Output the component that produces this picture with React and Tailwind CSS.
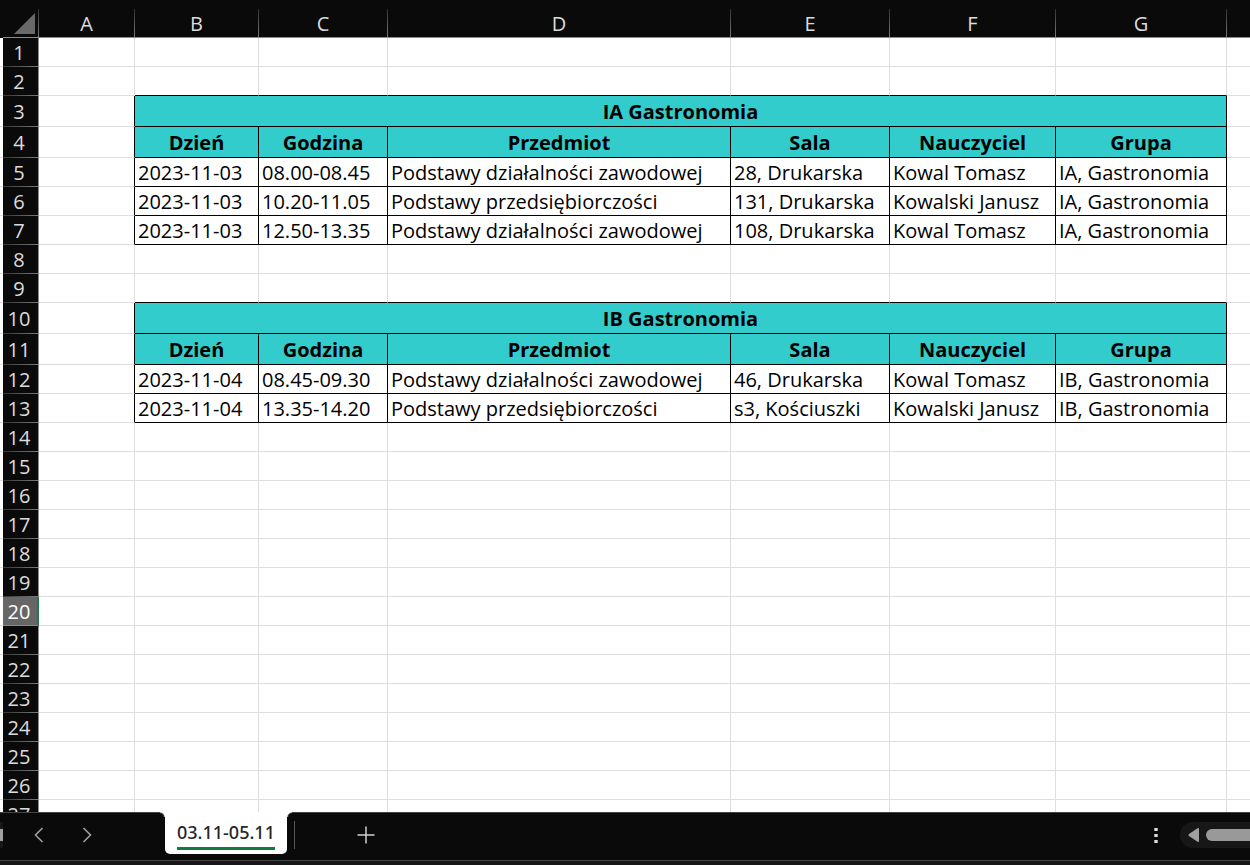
import React from "react";

const columns = ["A", "B", "C", "D", "E", "F", "G"];
const headings = ["Dzień", "Godzina", "Przedmiot", "Sala", "Nauczyciel", "Grupa"];

const rows = {
  3: { title: "IA Gastronomia" },
  4: { headings },
  5: { data: ["2023-11-03", "08.00-08.45", "Podstawy działalności zawodowej", "28, Drukarska", "Kowal Tomasz", "IA, Gastronomia"] },
  6: { data: ["2023-11-03", "10.20-11.05", "Podstawy przedsiębiorczości", "131, Drukarska", "Kowalski Janusz", "IA, Gastronomia"] },
  7: { data: ["2023-11-03", "12.50-13.35", "Podstawy działalności zawodowej", "108, Drukarska", "Kowal Tomasz", "IA, Gastronomia"] },
  10: { title: "IB Gastronomia" },
  11: { headings },
  12: { data: ["2023-11-04", "08.45-09.30", "Podstawy działalności zawodowej", "46, Drukarska", "Kowal Tomasz", "IB, Gastronomia"] },
  13: { data: ["2023-11-04", "13.35-14.20", "Podstawy przedsiębiorczości", "s3, Kościuszki", "Kowalski Janusz", "IB, Gastronomia"] },
};

const rowNumbers = Array.from({ length: 27 }, (_, i) => i + 1);
const SELECTED_ROW = 20;

function RowHeader({ number }) {
  const selected = number === SELECTED_ROW;
  return (
    <th
      scope="row"
      className={
        selected
          ? "border-b border-r-2 border-b-[#8a8a8a] border-r-[#1e7b4b] bg-[#666666] pb-0 pl-0 pr-[2px] pt-px text-center font-normal text-white"
          : "border-r border-[#8a8a8a] bg-[#0a0a0a] bg-[linear-gradient(to_right,#333333,#7a7a7a)] bg-[length:100%_1px] bg-bottom bg-no-repeat pb-0 pl-0 pr-[3px] pt-px text-center font-normal text-[#dcdcdc]"
      }
    >
      {number}
    </th>
  );
}

function Cells({ number }) {
  const row = rows[number];
  if (!row) {
    const aboveTable = Boolean(rows[number + 1]);
    return columns.slice(1).map((c) => (
      <td
        key={c}
        className={
          aboveTable
            ? "border-b border-r border-b-black border-r-[#dedede]"
            : "border-b border-r border-[#dedede]"
        }
      />
    ));
  }
  if (row.title) {
    return (
      <th colSpan={6} scope="colgroup" className="border-b border-r border-black bg-[#33cccc] px-0 pb-0 pt-[2px] text-center font-bold">
        {row.title}
      </th>
    );
  }
  if (row.headings) {
    return row.headings.map((h) => (
      <th key={h} scope="col" className="border-b border-r border-black bg-[#33cccc] px-0 pb-0 pt-[2px] text-center font-bold">
        {h}
      </th>
    ));
  }
  return row.data.map((value, i) => (
    <td key={i} className="overflow-hidden whitespace-nowrap border-b border-r border-black pb-0 pl-[3px] pr-0 pt-px">
      {value}
    </td>
  ));
}

function Sheet() {
  return (
    <table className="w-full table-fixed border-separate border-spacing-0 text-[20px] leading-[26px] text-black">
      <colgroup>
        <col className="w-[3px]" />
        <col className="w-[36px]" />
        <col className="w-[96px]" />
        <col className="w-[124px]" />
        <col className="w-[129px]" />
        <col className="w-[343px]" />
        <col className="w-[159px]" />
        <col className="w-[166px]" />
        <col className="w-[171px]" />
        <col />
      </colgroup>
      <thead>
        <tr className="h-[38px] bg-[#0a0a0a]">
          <td className="p-0" />
          <td className="border-b border-[#8a8a8a] bg-[linear-gradient(to_bottom,#333333,#7a7a7a)] bg-[length:1px_28px] bg-right-bottom bg-no-repeat p-0">
            <button type="button" aria-label="Select all" className="flex h-[37px] w-full items-end justify-end pb-[3px] pr-[4px]">
              <svg width="21" height="21" viewBox="0 0 21 21" aria-hidden="true">
                <path d="M21 0V21H0Z" fill="#696969" />
              </svg>
            </button>
          </td>
          {columns.map((c) => (
            <th
              key={c}
              scope="col"
              className="border-b border-[#8a8a8a] bg-[linear-gradient(to_bottom,#333333,#7a7a7a)] bg-[length:1px_28px] bg-right-bottom bg-no-repeat pb-0 pl-0 pr-px pt-[10px] text-center font-normal text-[#dcdcdc]"
            >
              {c}
            </th>
          ))}
          <td className="border-b border-[#8a8a8a] p-0" />
        </tr>
      </thead>
      <tbody>
        {rowNumbers.map((n) => (
          <tr key={n} className={rows[n] && !rows[n].data ? "h-[31px]" : "h-[29px]"}>
            <td className="border-b border-[#dedede] p-0" />
            <RowHeader number={n} />
            <td
              className={
                rows[n]
                  ? "border-b border-r border-b-[#dedede] border-r-black"
                  : "border-b border-r border-[#dedede]"
              }
            />
            <Cells number={n} />
            <td className="border-b border-[#dedede]" />
          </tr>
        ))}
      </tbody>
    </table>
  );
}

function Chevron({ d }) {
  return (
    <svg width="10" height="16" viewBox="0 0 10 16" fill="none" stroke="#a0a0a0" strokeWidth="1.6" aria-hidden="true">
      <path d={d} />
    </svg>
  );
}

function SheetBar() {
  return (
    <footer className="shrink-0 bg-[#0a0a0a]">
      <div className="flex h-[48px] items-start">
        <div className="flex h-full w-[165px] shrink-0 items-center border-t border-[#444444] pb-[4px]">
          <div className="flex h-[26px] w-[3px] items-center bg-[#171717]">
            <div className="h-[12px] w-full bg-[#a0a0a0]" />
          </div>
          <button type="button" aria-label="Previous sheet" className="ml-[24px] flex h-[32px] w-[24px] items-center justify-center">
            <Chevron d="M8.500 1L1.500 8L8.500 15" />
          </button>
          <button type="button" aria-label="Next sheet" className="ml-[24px] flex h-[32px] w-[24px] items-center justify-center">
            <Chevron d="M1.500 1L8.500 8L1.500 15" />
          </button>
        </div>
        <button
          type="button"
          className="relative h-[42px] shrink-0 rounded-b-[5px] bg-white px-[12px] pt-[5px] font-['Noto_Sans','Open_Sans',sans-serif] text-[18px] font-medium leading-[30px] text-[#262626] before:absolute before:-left-[5px] before:top-0 before:h-[5px] before:w-[5px] before:bg-[radial-gradient(circle_at_0_100%,#0a0a0a_3px,#444444_4px,#ffffff_5px)] after:absolute after:-right-[5px] after:top-0 after:h-[5px] after:w-[5px] after:bg-[radial-gradient(circle_at_100%_100%,#0a0a0a_3px,#444444_4px,#ffffff_5px)]"
        >
          <span className="-mt-1 block h-[33px] border-b-[3px] border-[#107c41]">03.11-05.11</span>
        </button>
        <div className="flex h-full grow items-center border-t border-[#444444] pb-[4px]">
          <div className="ml-[7px] h-[28px] w-px bg-[#555555]" />
          <button type="button" aria-label="New sheet" className="ml-[59px] flex h-[32px] w-[24px] items-center justify-center">
            <svg width="18" height="18" viewBox="0 0 18 18" fill="none" stroke="#d0d0d0" strokeWidth="1.5" aria-hidden="true">
              <path d="M9 0.500V17.500M0.500 9H17.500" />
            </svg>
          </button>
          <button type="button" aria-label="More options" className="ml-auto flex h-[32px] w-[24px] items-center justify-center">
            <svg width="4" height="16" viewBox="0 0 4 16" fill="#dddddd" aria-hidden="true">
              <path d="M0.300 1h3.400v3h-3.400zM0.300 7h3.400v3h-3.400zM0.300 13h3.400v3h-3.400z" />
            </svg>
          </button>
          <div className="ml-[12px] flex h-[26px] w-[70px] items-center rounded-l-full bg-[#171717] pl-[7px]">
            <button type="button" aria-label="Scroll left" className="flex h-[26px] w-[12px] items-center justify-center">
              <svg width="11" height="14" viewBox="0 0 11 14" fill="#a0a0a0" aria-hidden="true">
                <path d="M9.500 0.300Q11 -0.300 11 1V13Q11 14.300 9.500 13.700L1 8Q0 7 1 6Z" />
              </svg>
            </button>
            <div className="ml-[7px] h-[12px] grow rounded-l-full bg-[#999999]" />
          </div>
        </div>
      </div>
      <div className="h-[5px] border-t border-[#444444] bg-[#171717]" />
    </footer>
  );
}

export default function App() {
  return (
    <div className="flex h-screen flex-col overflow-hidden bg-white font-['Open_Sans','Noto_Sans',sans-serif]">
      <main className="min-h-0 grow overflow-hidden">
        <Sheet />
      </main>
      <SheetBar />
    </div>
  );
}
